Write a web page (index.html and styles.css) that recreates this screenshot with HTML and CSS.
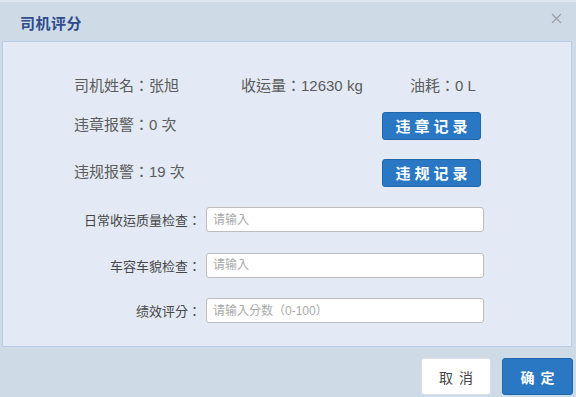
FILE: index.html
```html
<!DOCTYPE html>
<html lang="zh-CN">
<head>
<meta charset="utf-8">
<link rel="stylesheet" href="styles.css">
</head>
<body>
<div class="dialog">
  <div class="header">
    <span class="title">司机评分</span>
    <span class="close" aria-label="关闭">
      <svg width="11" height="11" viewBox="0 0 11 11"><path d="M1 1L10 10M10 1L1 10" stroke="#9aa0a8" stroke-width="1.3" fill="none"/></svg>
    </span>
  </div>
  <div class="panel" lang="zh-TW">
    <div class="info-row">
      <span class="c1">司机姓名：张旭</span>
      <span class="c2">收运量：12630 kg</span>
      <span class="c3">油耗：0 L</span>
    </div>
    <div class="alarm-row first">
      <span>违章报警：0 次</span>
      <button class="btn-record" lang="zh-CN">违章记录</button>
    </div>
    <div class="alarm-row">
      <span>违规报警：19 次</span>
      <button class="btn-record" lang="zh-CN">违规记录</button>
    </div>
    <div class="form">
      <div class="form-row">
        <label class="lbl">日常收运质量检查：</label>
        <input class="inp" type="text" placeholder="请输入">
      </div>
      <div class="form-row">
        <label class="lbl">车容车貌检查：</label>
        <input class="inp" type="text" placeholder="请输入">
      </div>
      <div class="form-row">
        <label class="lbl">绩效评分：</label>
        <input class="inp" type="text" placeholder="请输入分数（0-100）">
      </div>
    </div>
  </div>
  <div class="footer">
    <button class="btn-cancel">取消</button>
    <button class="btn-ok">确定</button>
  </div>
</div>
</body>
</html>
```
FILE: styles.css
```css
* { box-sizing: border-box; }
html, body { margin: 0; padding: 0; }
body {
  width: 576px;
  height: 397px;
  overflow: hidden;
  font-family: "Liberation Sans", "Noto Sans CJK SC", sans-serif;
  background: #cfdae8;
}
.dialog {
  width: 576px;
  height: 397px;
  background: #cfdae7;
  border-top: 2px solid #dde5ef;
}
.header {
  height: 39px;
  display: flex;
  align-items: center;
  justify-content: space-between;
  padding: 2px 14px 0 20px;
}
.title {
  font-size: 15px;
  font-weight: bold;
  color: #2e4c8c;
  letter-spacing: 0.5px;
}
.close {
  display: flex;
  margin-top: -8px;
}
.panel {
  margin: 0 4px 0 2px;
  height: 306px;
  background: #e3eaf5;
  border: 1px solid #b9cde8;
  padding: 34px 0 0 71px;
  color: #5b5b5b;
  font-size: 15px;
  font-family: "Liberation Sans", "Noto Sans CJK TC", sans-serif;
}
.info-row {
  display: flex;
  height: 20px;
  line-height: 20px;
}
.c1 { width: 167px; }
.c2 { width: 169px; }
.alarm-row {
  display: flex;
  justify-content: space-between;
  align-items: center;
  width: 407px;
  height: 28px;
  margin-top: 19px;
}
.alarm-row.first { margin-top: 16px; }
.alarm-row span { margin-top: -6px; }
.btn-record {
  width: 99px;
  height: 28px;
  border: 1px solid #1f66ab;
  border-radius: 3px;
  background: #2a78c3;
  color: #fff;
  font-family: "Noto Sans CJK SC", sans-serif;
  font-size: 15px;
  font-weight: bold;
  letter-spacing: 4px;
  padding: 0 0 0 4px;
  line-height: 26px;
}
.form {
  margin-top: 20px;
  margin-left: -71px;
  display: flex;
  flex-direction: column;
  gap: 20.5px;
}
.form-row {
  display: flex;
  align-items: center;
  height: 25px;
}
.lbl {
  width: 198px;
  text-align: right;
  font-size: 13px;
  color: #474747;
}
.inp {
  margin-left: 5px;
  width: 278px;
  height: 25px;
  border: 1px solid #bdbdbd;
  border-radius: 3px;
  background: #fff;
  padding: 0 6px;
  font-family: "Liberation Sans", "Noto Sans CJK TC", sans-serif;
  font-size: 12px;
  outline: none;
}
.inp::placeholder { color: #a9a9a9; }
.footer {
  display: flex;
  justify-content: flex-end;
  gap: 11px;
  padding: 11px 3px 0 0;
}
.footer button {
  height: 37px;
  border-radius: 3px;
  font-family: "Noto Sans CJK SC", sans-serif;
  font-size: 14px;
  letter-spacing: 6px;
  padding: 0 0 0 6px;
}
.btn-cancel {
  width: 70px;
  background: #fff;
  border: 1px solid #d8e0ea;
  color: #444;
}
.btn-ok {
  width: 71px;
  background: #2a78c3;
  border: 1px solid #1f66ab;
  color: #fff;
  font-weight: bold;
}
```
